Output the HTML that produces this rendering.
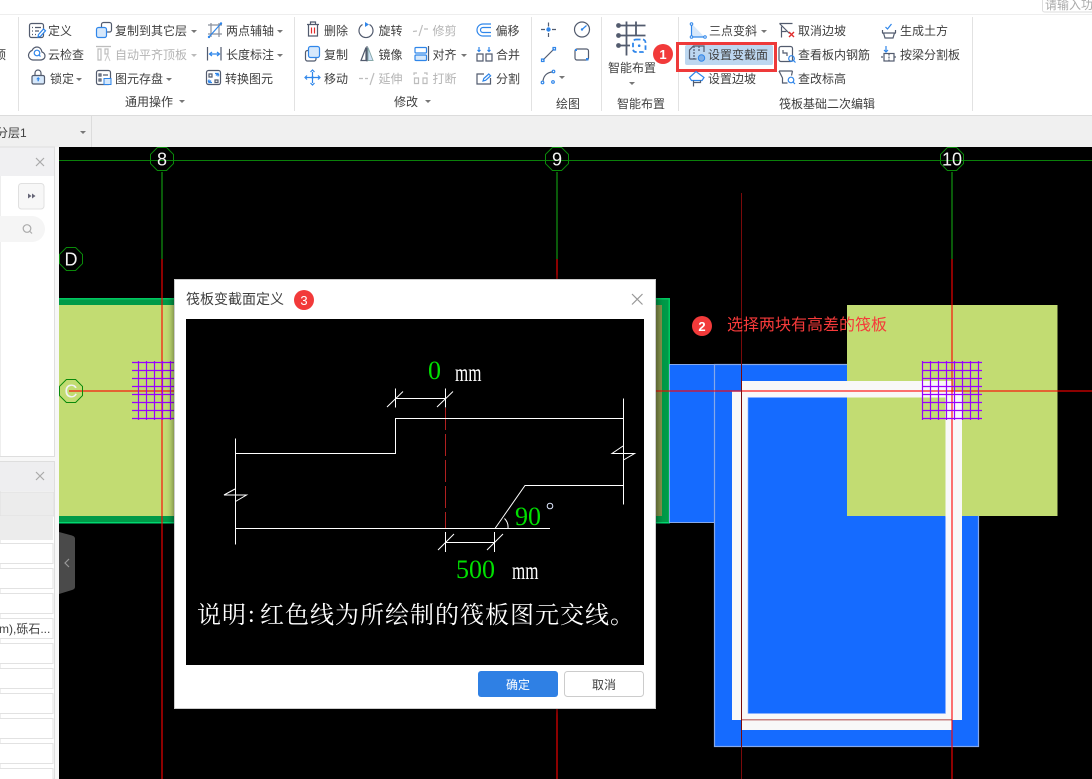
<!DOCTYPE html>
<html lang="zh"><head><meta charset="utf-8"><title>筏板变截面定义</title>
<style>
html,body{margin:0;padding:0;background:#fff;width:1092px;height:779px;overflow:hidden}
svg{display:block;position:absolute;left:0;top:0}
text{font-family:"Liberation Sans","Noto Sans CJK SC",sans-serif;font-size:12px;fill:#404040}
.d{fill:none;stroke:#525b6e;stroke-width:1.2}
.b{fill:none;stroke:#2f86ea;stroke-width:1.2}
.y{fill:none;stroke:#bdbdbd;stroke-width:1.2}
.w{fill:none;stroke:#fff;stroke-width:1}
.tr{fill:#777}
.num{font-family:"Liberation Sans",sans-serif;font-size:18px;fill:#f2f2f2;text-anchor:middle}
.ser{font-family:"Liberation Serif","Noto Serif CJK SC",serif}
.badge{font-family:"Liberation Sans",sans-serif;font-size:13px;fill:#fff;text-anchor:middle;font-weight:bold}
</style></head><body>
<svg width="1092" height="779" viewBox="0 0 1092 779" xmlns="http://www.w3.org/2000/svg">
<defs><polygon id="oct" points="-4.6,-11.5 4.6,-11.5 11.5,-4.6 11.5,4.6 4.6,11.5 -4.6,11.5 -11.5,4.6 -11.5,-4.6" fill="none" stroke="#0a8a0a" stroke-width="1"/></defs>

<!-- ribbon -->
<rect width="1092" height="115" fill="#fff"/>
<rect y="14" width="1092" height="1" fill="#eee"/>
<rect x="1042.5" y="-5" width="60" height="17" rx="2" fill="#fff" stroke="#ddd"/>
<text x="1045" y="9" style="fill:#aaa">请输入功</text>
<g fill="#e2e2e2"><rect x="18" y="17" width="1" height="94"/><rect x="294" y="17" width="1" height="94"/><rect x="531" y="17" width="1" height="94"/><rect x="601" y="17" width="1" height="94"/><rect x="678" y="17" width="1" height="94"/><rect x="972" y="17" width="1" height="94"/></g>
<rect y="115" width="1092" height="32" fill="#f0f0f0"/><rect y="115" width="1092" height="1" fill="#dcdcdc"/><rect x="91" y="116" width="1" height="31" fill="#dcdcdc"/>
<text x="-6" y="59">顶</text>
<text x="-4" y="137">分层1</text><polygon class="tr" points="80,131 86,131 83,134"/>

<!-- group 1 text -->
<text x="48" y="35">定义</text><text x="115" y="35">复制到其它层</text><polygon class="tr" points="191,30 197,30 194,33"/><text x="226" y="35">两点辅轴</text><polygon class="tr" points="277,30 283,30 280,33"/>
<text x="48" y="59">云检查</text><text x="115" y="59" style="fill:#b4b4b4">自动平齐顶板</text><polygon points="191,54 197,54 194,57" fill="#bbb"/><text x="226" y="59">长度标注</text><polygon class="tr" points="277,54 283,54 280,57"/>
<text x="50" y="83">锁定</text><polygon class="tr" points="76,78 82,78 79,81"/><text x="115" y="83">图元存盘</text><polygon class="tr" points="166,78 172,78 169,81"/><text x="225" y="83">转换图元</text>
<text x="125" y="106">通用操作</text><polygon class="tr" points="179,100 185,100 182,103"/>

<!-- group 1 icons -->
<rect class="d" x="29.5" y="23.5" width="14" height="14" rx="2"/><path class="d" d="M32 27.5h1M35 27.5h6M32 31h1M35 31h4M32 34.5h1M35 34.5h1"/><path fill="#fff" stroke="#2f86ea" stroke-width="1.2" d="M38 37l.5-2.500 5-5.500 2 1.800-5 5.500z"/>
<rect x="101.500" y="22.500" width="10" height="9.500" rx="2" fill="#fff" stroke="#525b6e" stroke-width="1.2"/><rect x="96.500" y="27.500" width="10" height="10" rx="2" fill="#d6e8fb" stroke="#2f86ea" stroke-width="1.2"/>
<path fill="none" stroke="#8a909c" stroke-width="1.200" d="M211 23v14M219 23v14M208 25h14M208 34h14"/><path class="b" d="M208.500 37.500L221.500 23" stroke-width="1.5"/><circle cx="209" cy="37" r="1.200" fill="#2f86ea"/><circle cx="221" cy="23.500" r="1.200" fill="#2f86ea"/>
<path class="d" d="M33 60h7c3.500 0 5-2 5-4s-1.500-3.500-3-4c-.5-3-2.500-5-5-5s-4 1.500-5 3.500c-2 .5-3.500 3-3.500 5s2 4.500 4.500 4.500z"/><circle class="b" cx="37" cy="53" r="2.800"/><path class="b" d="M39 55l1.500 1.500"/>
<path class="y" d="M96 46.500h15M98 49v11h3V49zM105 49v5h3v-5z"/><path d="M105 61l2.500-6 2.500 6" fill="none" stroke="#ccc" stroke-width="1"/>
<path class="d" d="M207.500 47v13.500M221 47v13.500"/><path class="b" d="M209.500 54h10M212 52l-2.500 2 2.500 2M217 52l2.500 2-2.500 2"/>
<path class="d" d="M35 75.500v-2.500a3 3 0 0 1 6 0v2.500"/><rect x="32" y="75.500" width="12.500" height="8.500" rx="1.500" fill="#d6e8fb" stroke="#525b6e" stroke-width="1.200"/><path fill="#2f86ea" d="M38.200 77l2 2.300h-1.300v2h-1.400v-2h-1.300z"/>
<rect class="d" x="96.500" y="70.500" width="14" height="14" rx="2"/><path class="d" d="M99 74h2v2h-2zM103 75h5M99 79h2v2h-2z"/><rect x="104" y="78.500" width="7" height="6" fill="#d6e8fb" stroke="#2f86ea"/>
<rect class="d" x="206.500" y="70.500" width="14" height="14" rx="2"/><path class="d" d="M209 74h3v3h-3zM215 80h3v2.500h-3z"/><path class="b" d="M218 76.500v-3h-3M216 75.500l2-2 1 2M209 79.500v3h3M211 80.500l-2 2-1-2"/>

<!-- modify -->
<text x="324" y="35">删除</text><text x="378.500" y="35">旋转</text><text x="432.500" y="35" style="fill:#b4b4b4">修剪</text><text x="495.500" y="35">偏移</text>
<text x="324" y="59">复制</text><text x="378.500" y="59">镜像</text><text x="432.500" y="59">对齐</text><polygon class="tr" points="461,54 467,54 464,57"/><text x="496" y="59">合并</text>
<text x="324" y="83">移动</text><text x="378.500" y="83" style="fill:#b4b4b4">延伸</text><text x="432.500" y="83" style="fill:#b4b4b4">打断</text><text x="496" y="83">分割</text>
<text x="394" y="106">修改</text><polygon class="tr" points="425,100 431,100 428,103"/>
<path class="d" d="M307 24.500h12M308.500 24.500v11.500h9V24.500M310.500 24.500v-2.500h5v2.500"/><path d="M311.500 27.500v6M314.500 27.500v6" stroke="#e02c2c" stroke-width="1.200" fill="none"/>
<path class="d" d="M362.500 24.500a7 7 0 1 0 7 0"/><path fill="#2f86ea" d="M365 22l4 2.500-4 2.500z"/>
<path class="y" d="M413 31.500l4-.5M419 36l3.500-11M424 29h4"/>
<path class="b" d="M491 24h-8a6 6 0 0 0 0 12h8M491 27.500h-8a2.500 2.500 0 0 0 0 5h8"/>
<rect x="305.500" y="50.500" width="10.500" height="10.500" rx="2" fill="#fff" stroke="#525b6e" stroke-width="1.200"/><rect x="308.500" y="46.500" width="11" height="11" rx="2" fill="#d6e8fb" stroke="#2f86ea" stroke-width="1.200"/>
<path d="M361 60.500l5-13v13z" fill="#fff" stroke="#525b6e" stroke-width="1.200"/><path d="M368 47.500l5 13h-5z" fill="#cfe2f8" stroke="#8aa" stroke-width="1"/><path d="M367 46v15.500" stroke="#525b6e" stroke-width="1"/>
<rect class="b" x="415" y="47.500" width="11.500" height="5.500" rx="1"/><rect x="415" y="55" width="11.500" height="5.500" rx="1" fill="#d6e8fb" stroke="#2f86ea" stroke-width="1.200"/><path class="d" d="M428.500 46v15"/>
<path class="d" d="M477 54h6v7h-6zM486 54h6v7h-6z"/><path class="b" d="M479 47v4.500M477.500 50l1.500 1.500 1.500-1.500M489 47v4.500M487.500 50l1.500 1.500 1.500-1.500"/>
<path class="b" d="M312.500 72v11M306 77.500h13"/><path class="b" d="M310.500 72l2-2 2 2M310.500 83l2 2 2-2M307 75.500l-2 2 2 2M318 75.500l2 2-2 2"/><circle cx="312.500" cy="77.500" r="1.200" fill="#2f86ea"/>
<path class="y" d="M359 78.500h4M365 78.500h3M370 85l4-12"/>
<path class="y" d="M414 75v-2h3M427 75v-2h-3M414.500 78h4v5.500h-4zM423 78h4v5.500h-4z"/>
<path class="d" d="M484 74h-7v10h13.500v-6"/><path class="b" d="M483 81l.8-2.500 5-4.500 1.800 1.800-5 4.500z"/>

<!-- draw -->
<text x="556" y="108">绘图</text>
<path class="d" d="M541 29.500h4M552 29.500h4M548.500 22.500v4M548.500 33v4"/><circle cx="548.500" cy="29.500" r="2.200" fill="#2f86ea"/>
<circle class="d" cx="582" cy="29.500" r="7.500"/><path class="b" d="M582 29.500l4.500-4"/><circle cx="582" cy="29.500" r="1.200" fill="#2f86ea"/>
<path class="d" d="M543 60l11-11"/><rect class="b" x="541.500" y="59" width="2.500" height="2.500"/><rect class="b" x="553" y="47.500" width="2.500" height="2.500"/>
<rect class="d" x="575" y="49" width="13.500" height="11" rx="2"/><rect x="586" y="58" width="2.500" height="2.500" fill="#2f86ea"/><rect x="575" y="49" width="2" height="2" fill="#2f86ea"/>
<path class="d" d="M543 81c.5-5 4-9 10-9"/><circle class="b" cx="542.500" cy="82.500" r="1.300"/><circle class="b" cx="553.500" cy="71.500" r="1.300"/><circle class="b" cx="553" cy="82" r="1.300"/><polygon class="tr" points="559,76 565,76 562,79"/>

<!-- smart -->
<text x="608" y="72">智能布置</text><polygon class="tr" points="629,82 635,82 632,85"/><text x="617" y="108">智能布置</text>
<path fill="none" stroke="#525b6e" stroke-width="1.800" d="M618 25.500h27.500M618 35.500h27.500M618 45.500h12M626.500 21.500v34M636 21.500v14"/>
<circle cx="618.500" cy="25.500" r="2.400" fill="#525b6e"/><circle cx="618.500" cy="35.500" r="2.400" fill="#525b6e"/><circle cx="618.500" cy="45.500" r="2.400" fill="#525b6e"/>
<rect x="633" y="39.500" width="12.500" height="12.500" rx="3" fill="#fff" stroke="#2f86ea" stroke-width="1.800" stroke-dasharray="4.500 2.500"/><circle cx="639.200" cy="45.700" r="1.300" fill="#2f86ea"/>

<!-- raft group -->
<rect x="685" y="45" width="88" height="20" rx="2" fill="#bdd7f0"/>
<rect x="677.500" y="43.500" width="98" height="27" fill="none" stroke="#ee3a3a" stroke-width="3"/>
<circle cx="663" cy="54" r="10" fill="#f23a3a"/><text class="badge" x="663" y="59">1</text>
<text x="709" y="35">三点变斜</text><polygon class="tr" points="761,30 767,30 764,33"/><text x="798" y="35">取消边坡</text><text x="900" y="35">生成土方</text>
<text x="708" y="59">设置变截面</text><text x="798" y="59">查看板内钢筋</text><text x="900" y="59">按梁分割板</text>
<text x="708" y="83">设置边坡</text><text x="798" y="83">查改标高</text>
<text x="779" y="108">筏板基础二次编辑</text>
<path fill="#d6e8fb" d="M692 24l12 12.500h-12z"/><path class="b" d="M691.500 24v13h13"/><circle cx="691.500" cy="24" r="1.300" fill="#fff" stroke="#2f86ea"/><circle cx="691.500" cy="37" r="1.300" fill="#fff" stroke="#2f86ea"/><circle cx="705" cy="37" r="1.300" fill="#fff" stroke="#2f86ea"/>
<path class="d" d="M779.500 23.500h13M779.500 23.500l10 10M781.500 26.500v11M781.500 31.500h5"/><path d="M789 32l5 5M794 32l-5 5" stroke="#e02c2c" stroke-width="1.400"/>
<path class="d" d="M882 33h14M883.500 33l1.500 5h8l1.500-5"/><path class="b" d="M885.500 27l2 2 4-5"/><path class="d" d="M882.500 33v-3M895.500 33v-3"/>
<path class="d" d="M689.500 59V50l4-4h10.500v6M689.500 59h7"/><path class="d" d="M694 46v13M699 46v6" stroke-dasharray="2 1"/><circle cx="701.500" cy="58" r="3.200" fill="#7fb0e8" stroke="#2f86ea"/>
<rect class="d" x="779" y="46.500" width="13.500" height="15" rx="2"/><path class="d" d="M783 50v3h4v3"/><circle class="b" cx="791.500" cy="58.500" r="2.800"/><path class="b" d="M793.500 60.500l2 2"/>
<path class="b" d="M886 46v6M884 50l2 2 2-2"/><rect class="d" x="884" y="53.500" width="10" height="7.500"/><path class="d" d="M881 57h3M894 57h3M889 53.500v7.500" stroke-dasharray="2 1"/>
<path fill="#fff" stroke="#2f86ea" stroke-width="1.200" d="M689.500 77.500l6.500-6 8 6-2 3h-10.500z"/><path class="d" d="M693.500 80.500v6M693.500 82.500h7v-2"/>
<path class="d" d="M779 71h13.500M779 71l3.500 7v5h5M792.500 71l-1 4.500"/><circle class="b" cx="791" cy="80" r="2.800"/><path class="b" d="M793 82l2 2"/>

<!-- left panel -->
<rect y="147" width="59" height="632" fill="#f7f7f7"/>
<rect y="147" width="54.500" height="309.500" fill="#fff" stroke="#dedede"/>
<rect y="147.500" width="54" height="28.500" fill="#f0f0f2"/>
<path d="M36 158l8 8M44 158l-8 8" stroke="#aaa" stroke-width="1.200"/>
<rect x="18.500" y="183.500" width="25.500" height="25.500" rx="3" fill="#f7f7f7" stroke="#e0e0e0"/>
<path fill="#667" d="M28 193.500l3.500 2.500-3.500 2.500zM32 193.500l3.500 2.500-3.500 2.500z"/>
<path d="M-10 216h42a13 13 0 0 1 0 26h-42z" fill="#f5f5f5"/><circle cx="27" cy="228.500" r="3.800" fill="none" stroke="#aaa" stroke-width="1.200"/><path d="M30 231.500l2 2" stroke="#aaa" stroke-width="1.200"/>
<rect y="461.500" width="54.500" height="317.500" fill="#fff" stroke="#dedede"/>
<rect y="462" width="54" height="29" fill="#eeeef0"/>
<path d="M36 472l8 8M44 472l-8 8" stroke="#aaa" stroke-width="1.200"/>
<rect y="492" width="54" height="24" fill="#ececec" stroke="#e0e0e0"/><rect y="516" width="53" height="24" fill="#ececec"/>
<g fill="#fff" stroke="#e2e2e2" stroke-width="1"><rect x="-2" y="543.500" width="55" height="20"/><rect x="-2" y="568.500" width="55" height="20"/><rect x="-2" y="593.500" width="55" height="20"/><rect x="-2" y="618.500" width="55" height="20"/><rect x="-2" y="643.500" width="55" height="20"/><rect x="-2" y="668.500" width="55" height="20"/><rect x="-2" y="693.500" width="55" height="20"/><rect x="-2" y="718.500" width="55" height="20"/><rect x="-2" y="743.500" width="55" height="20"/><rect x="-2" y="768.500" width="55" height="20"/></g>
<text x="-1" y="633">m),砾石...</text>

<!-- canvas -->
<rect x="59" y="147" width="1033" height="632" fill="#000"/>
<rect x="59" y="160" width="1033" height="1" fill="#0a800a"/>
<g fill="#0a5a0a"><rect x="161" y="172" width="2" height="87"/><rect x="556" y="172" width="2" height="87"/><rect x="951" y="172" width="2" height="87"/></g>

<!-- left slab -->
<rect x="59" y="298" width="611" height="225" fill="#009a48"/>
<rect x="59" y="298" width="611" height="1.500" fill="#00c860"/><rect x="59" y="522" width="611" height="1.500" fill="#00d870"/><rect x="668.500" y="298" width="1.500" height="225" fill="#00c860"/>
<rect x="59" y="305" width="603" height="211" fill="#c2dc72"/>
<rect x="655" y="305" width="7" height="211" fill="#5a6030" fill-opacity=".6"/>

<!-- blue slab -->
<rect x="669.500" y="364.500" width="46" height="158" fill="#156bff" stroke="#86a9ea"/>
<rect x="714.500" y="364.500" width="264" height="382" fill="#156bff" stroke="#86a9ea" stroke-width="1.200"/>
<rect x="732" y="391.500" width="230" height="328.500" fill="#f8f8f8"/>
<rect x="742" y="381" width="210" height="349" fill="#f8f8f8"/>
<rect x="748" y="397.500" width="197.500" height="316" fill="#156bff" stroke="#8ab0ff" stroke-width=".6"/>
<!-- right green slab -->
<rect x="847" y="305" width="210.500" height="211" fill="#c2dc72"/>
<rect x="847" y="381" width="105" height="16.500" fill="#f8f8f8"/>
<rect x="945.500" y="391.500" width="16.500" height="125" fill="#f8f8f8"/>
<rect x="945.500" y="381" width="6.500" height="16" fill="#f8f8f8"/>

<!-- axes red -->
<g fill="#ff0000" fill-opacity=".55"><rect x="161" y="259" width="2" height="520"/><rect x="556" y="259" width="2" height="520"/><rect x="951" y="259" width="2" height="520"/><rect x="69" y="390" width="1023" height="2"/></g>
<rect x="741" y="193" width="1" height="586" fill="#7a0a0a"/>
<rect x="742" y="719" width="210" height="1.500" fill="#a02020" fill-opacity=".55"/>

<!-- mesh -->
<path fill="none" stroke="#9900ff" stroke-width="1.200" d="M132 362.500H192M132 370.500H192M132 378.500H192M132 386.500H192M132 394.500H192M132 402.500H192M132 410.500H192M132 418.500H192M138.500 361V420M146.500 361V420M154.500 361V420M162.500 361V420M170.500 361V420"/>
<path fill="none" stroke="#9900ff" stroke-width="1.200" d="M922 362.500H982M922 370.500H982M922 378.500H982M922 386.500H982M922 394.500H982M922 402.500H982M922 410.500H982M922 418.500H982M922.500 361V420M930.500 361V420M938.500 361V420M946.500 361V420M954.500 361V420M962.500 361V420M970.500 361V420M978.500 361V420"/>

<!-- axis labels -->
<use href="#oct" x="162" y="159"/><text class="num" x="162" y="165.500">8</text>
<use href="#oct" x="557" y="159"/><text class="num" x="557" y="165.500">9</text>
<use href="#oct" x="952" y="159"/><text class="num" x="952" y="165.500">10</text>
<use href="#oct" x="71" y="259"/><text class="num" x="71" y="265.500">D</text>
<use href="#oct" x="71" y="391"/><text class="num" x="71" y="397.500">C</text>

<!-- handle -->
<path fill="#4a4a4a" d="M59 532l13 3.500q3 1 3 3V587q0 2-3 3l-13 4z"/><path d="M69 559l-4 4 4 4" fill="none" stroke="#999" stroke-width="1.200"/>

<!-- annotation -->
<circle cx="702" cy="326" r="10" fill="#f23a3a"/><text class="badge" x="702" y="331">2</text>
<text x="727" y="330" style="font-size:16px;fill:#f53a3a">选择两块有高差的筏板</text>

<!-- dialog -->
<rect x="174.500" y="279.500" width="481" height="429" fill="#fff" stroke="#ccc" style="filter:drop-shadow(0 0 4px rgba(0,0,0,.6))"/>
<text x="186" y="304" style="font-size:14px">筏板变截面定义</text>
<circle cx="304" cy="300" r="10" fill="#f23a3a"/><text class="badge" x="304" y="305" style="font-weight:normal">3</text>
<path d="M632 294l10.500 10.500M642.500 294L632 304.500" stroke="#999" stroke-width="1.200"/>
<rect x="186" y="319" width="458" height="346" fill="#000"/>

<path d="M445.500 408V528" stroke="#b02020" stroke-width="1" stroke-dasharray="22 4" fill="none"/>
<g class="w">
<path d="M395.500 388.500v19M445.500 388.500v19M395.500 398.500h50M387 407l16-15.500M437 407l16-15.500"/>
<path d="M235.500 453.500h160v-35h228"/>
<path d="M235.500 438.500v106M623.500 398.500v106"/>
<path d="M235 489l-11 6h22.500l-11 6.500M623 446l-11 7.500h22.500l-11 6.500"/>
<path d="M235 528.500h315M495 528.500l30-43h98.500"/>
<path d="M504.500 518.500q4 4 3.500 9.500"/>
<path d="M445.500 532v20M494.500 532v20M445.500 542.500h49M438 550l16-16M487 550l16-16"/>
</g>
<circle cx="550" cy="506" r="2.800" fill="none" stroke="#dfe8ff" stroke-width="1"/>
<g class="ser">
<text class="ser" x="428" y="379" style="font-size:26px;fill:#00e000">0</text>
<text class="ser" x="515" y="525" style="font-size:26px;fill:#00e000">90</text>
<text class="ser" x="456" y="578" style="font-size:26px;fill:#00e000">500</text>
<text class="ser" transform="translate(455,381) scale(1,1.500)" style="font-size:17px;fill:#fff">mm</text>
<text class="ser" transform="translate(512,579) scale(1,1.500)" style="font-size:17px;fill:#fff">mm</text>
<text class="ser" x="197" y="623" style="font-size:24px;fill:#fff;letter-spacing:1px">说明</text>
<text class="ser" x="248" y="622" style="font-size:24px;fill:#fff">:</text>
<text class="ser" x="260" y="623" style="font-size:24px;fill:#fff;letter-spacing:1px">红色线为所绘制的筏板图元交线。</text>
</g>
<rect x="478" y="671" width="80" height="26" rx="3" fill="#2f80e4"/>
<text x="506" y="689" style="fill:#fff">确定</text>
<rect x="564.500" y="671.500" width="79" height="25" rx="3" fill="#fff" stroke="#ccc"/>
<text x="592" y="689">取消</text>
</svg>
</body></html>
